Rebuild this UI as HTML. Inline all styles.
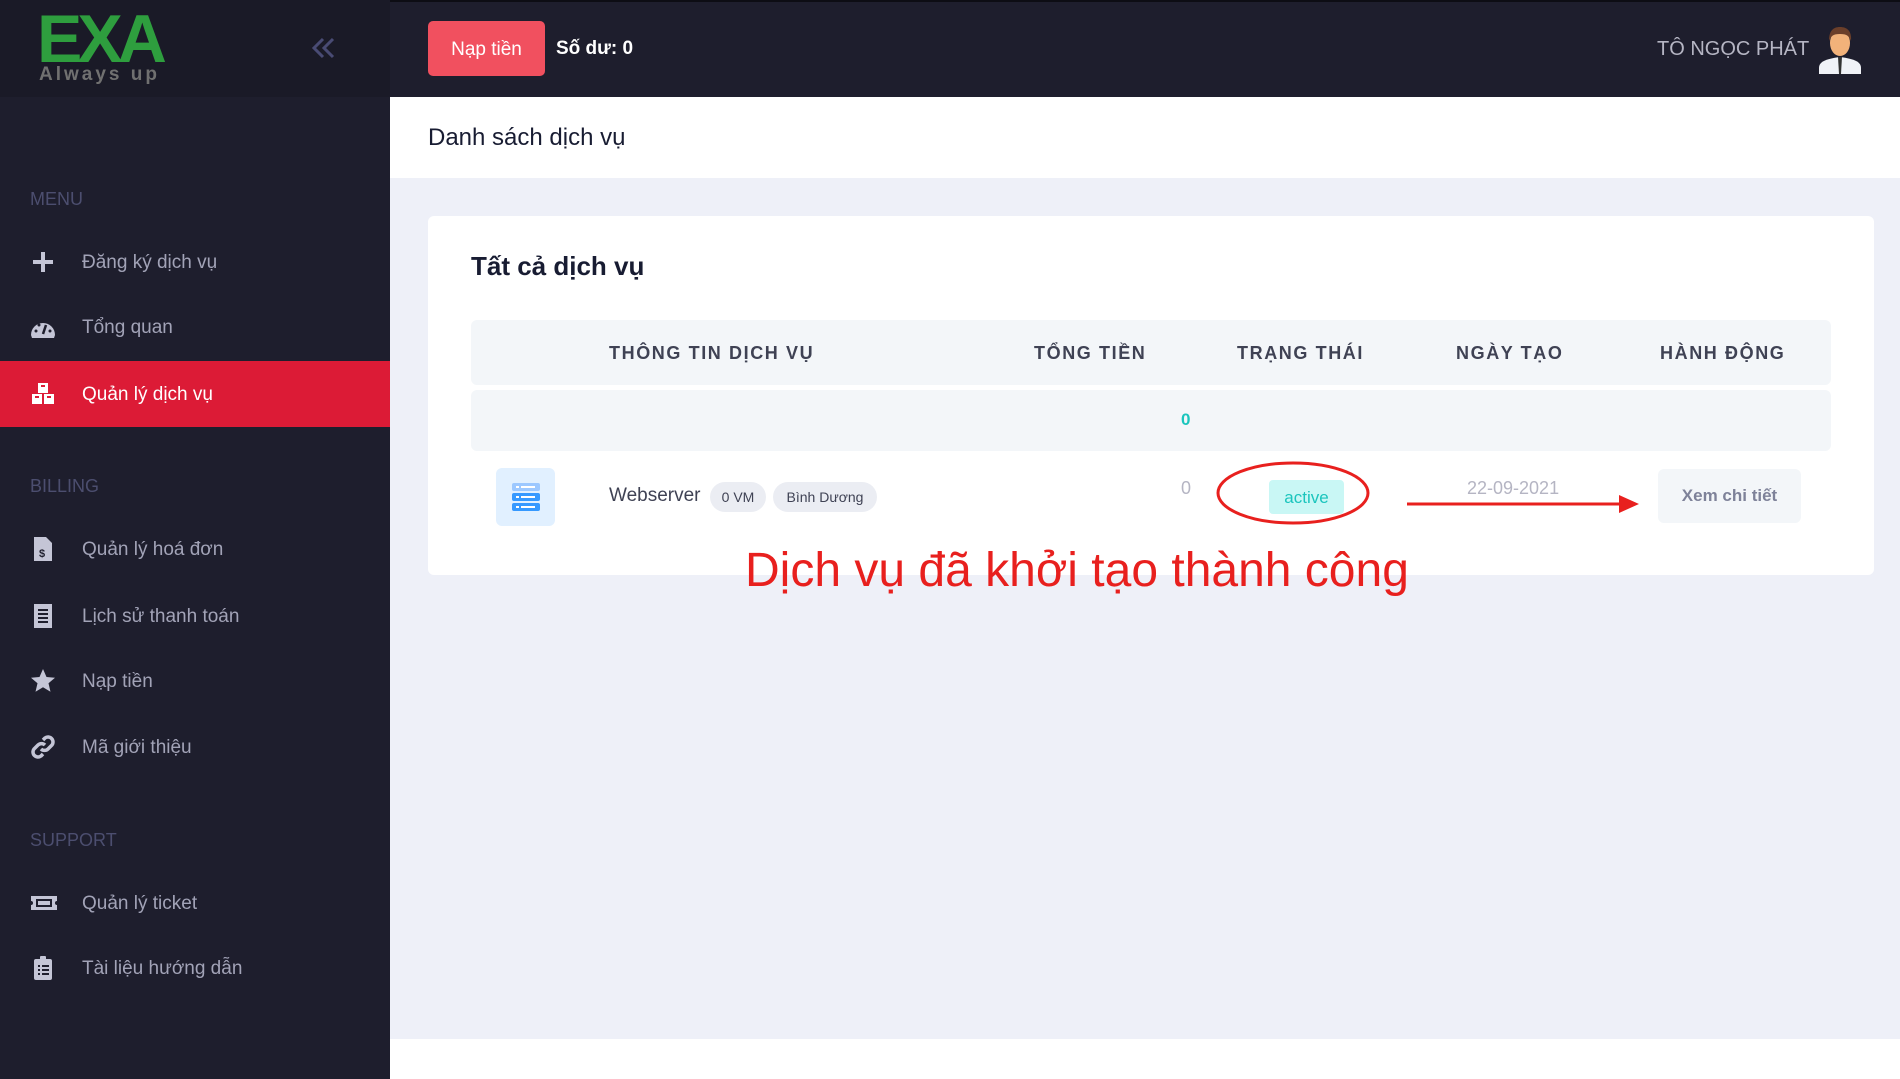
<!DOCTYPE html>
<html><head><meta charset="utf-8"><style>
*{margin:0;padding:0;box-sizing:border-box}
body{width:1900px;height:1079px;overflow:hidden;background:#eef0f8;font-family:"Liberation Sans","Noto Sans CJK SC",sans-serif;position:relative}
.a{position:absolute;white-space:nowrap}
.side{left:0;top:0;width:390px;height:1079px;background:#1e1e2d}
.logo{left:0;top:0;width:390px;height:97px;background:#1a1a27}
.top{left:390px;top:0;width:1510px;height:97px;background:#1e1e2d;border-top:2px solid #0d0d14}
.sec{left:30px;font-size:18px;color:#4c4e6f}
.it{left:82px;font-size:19px;color:#a2a3b7;transform:translateY(-45%)}
.ic{left:30px;width:26px;height:26px;transform:translateY(-50%)}
.hd{font-size:18px;font-weight:bold;color:#3f4254;letter-spacing:1.6px;top:343px}
</style></head><body>
<div class="a side"></div>
<div class="a logo"></div>
<div class="a" style="left:37px;top:0px;font-size:68px;font-weight:bold;color:#2e9e3e;letter-spacing:-5px">EXA</div>
<div class="a" style="left:39px;top:64px;font-size:19px;font-weight:bold;color:#707070;letter-spacing:3px">Always up</div>
<svg class="a" style="left:310px;top:36px" width="28" height="24" viewBox="0 0 28 24"><path d="M13 3 4 12l9 9M23 3l-9 9 9 9" fill="none" stroke="#494b74" stroke-width="3"/></svg>
<div class="a top"></div>
<div class="a" style="left:428px;top:21px;width:117px;height:55px;background:#f1505f;border-radius:5px;color:#fff;font-size:19px;line-height:57px;text-align:center">Nạp tiền</div>
<div class="a" style="left:556px;top:38px;font-size:19px;font-weight:bold;color:#fff">Số dư: 0</div>
<div class="a" style="left:1657px;top:38px;font-size:20px;color:#b5b5c3">TÔ NGỌC PHÁT</div>
<svg class="a" style="left:1817px;top:24px" width="46" height="50" viewBox="0 0 46 50"><path d="M2 50v-6c0-6 6-9 21-11 15 2 21 5 21 11v6z" fill="#f0f2f7"/><path d="M21 33h4l-1 17h-2z" fill="#333"/><ellipse cx="23" cy="19" rx="10" ry="13" fill="#f2b27a"/><path d="M12 17c0-10 4-14 11-14s12 4 11 14c-2-5-4-7-11-7s-9 2-11 7z" fill="#6b3f2a"/></svg>
<div class="a" style="left:390px;top:97px;width:1510px;height:81px;background:#fff"></div>
<div class="a" style="left:428px;top:124px;font-size:24px;color:#181c32">Danh sách dịch vụ</div>
<div class="a" style="left:428px;top:216px;width:1446px;height:359px;background:#fff;border-radius:6px"></div>
<div class="a" style="left:471px;top:251px;font-size:26px;font-weight:bold;color:#181c32">Tất cả dịch vụ</div>
<div class="a" style="left:471px;top:320px;width:1360px;height:65px;background:#f3f6f9;border-radius:6px"></div>
<div class="a" style="left:471px;top:390px;width:1360px;height:61px;background:#f3f6f9;border-radius:6px"></div>
<div class="a hd" style="left:609px">THÔNG TIN DỊCH VỤ</div>
<div class="a hd" style="left:1034px">TỔNG TIỀN</div>
<div class="a hd" style="left:1237px">TRẠNG THÁI</div>
<div class="a hd" style="left:1456px">NGÀY TẠO</div>
<div class="a hd" style="left:1660px">HÀNH ĐỘNG</div>
<div class="a" style="left:1181px;top:410px;font-size:17px;font-weight:bold;color:#1bc5bd">0</div>
<div class="a" style="left:496px;top:468px;width:59px;height:58px;background:#e1f0ff;border-radius:6px"></div>
<svg class="a" style="left:510px;top:481px" width="32" height="32" viewBox="0 0 32 32"><rect x="2" y="2" width="28" height="8" rx="2" fill="#9cc8ff"/><rect x="2" y="12" width="28" height="8" rx="2" fill="#3699ff"/><rect x="2" y="22" width="28" height="8" rx="2" fill="#3699ff"/><rect x="6" y="5" width="3" height="2" fill="#fff"/><rect x="11" y="5" width="14" height="2" fill="#fff"/><rect x="6" y="15" width="3" height="2" fill="#fff"/><rect x="11" y="15" width="14" height="2" fill="#fff"/><rect x="6" y="25" width="3" height="2" fill="#fff"/><rect x="11" y="25" width="14" height="2" fill="#fff"/></svg>
<div class="a" style="left:609px;top:485px;font-size:19px;color:#3f4254">Webserver</div>
<div class="a" style="left:710px;top:482px;width:56px;height:30px;background:#ebedf3;border-radius:15px;font-size:14px;line-height:30px;text-align:center;color:#3f4254">0 VM</div>
<div class="a" style="left:773px;top:482px;width:104px;height:30px;background:#ebedf3;border-radius:15px;font-size:14px;line-height:30px;text-align:center;color:#3f4254">Bình Dương</div>
<div class="a" style="left:1181px;top:478px;font-size:18px;color:#b5b5c3">0</div>
<div class="a" style="left:1269px;top:480px;width:75px;height:34px;background:#c9f7f5;border-radius:4px;font-size:17px;line-height:36px;text-align:center;color:#1bc5bd">active</div>
<svg class="a" style="left:1210px;top:458px" width="166" height="70"><ellipse cx="83" cy="35" rx="75" ry="30" fill="none" stroke="#e8201e" stroke-width="3"/></svg>
<div class="a" style="left:1467px;top:478px;font-size:18px;color:#b5b5c3">22-09-2021</div>
<svg class="a" style="left:1405px;top:492px" width="236" height="24"><path d="M2 12h212" stroke="#e8201e" stroke-width="3"/><path d="M214 3l20 9-20 9z" fill="#e8201e"/></svg>
<div class="a" style="left:1658px;top:469px;width:143px;height:54px;background:#f3f6f9;border-radius:6px;font-size:17px;font-weight:bold;line-height:54px;text-align:center;color:#7e8299">Xem chi tiết</div>
<div class="a" style="left:745px;top:543px;font-size:48px;color:#e8201e">Dịch vụ đã khởi tạo thành công</div>
<div class="a" style="left:390px;top:1039px;width:1510px;height:40px;background:#fff"></div>

<div class="a sec" style="top:189px">MENU</div>
<div class="a sec" style="top:476px">BILLING</div>
<div class="a sec" style="top:830px">SUPPORT</div>
<div class="a" style="left:0;top:361px;width:390px;height:66px;background:#dc1b36"></div>

<svg class="a ic" style="top:262px" viewBox="0 0 26 26"><path d="M13 3v20M3 13h20" stroke="#c4c5d6" stroke-width="4"/></svg>
<div class="a it" style="top:262px">Đăng ký dịch vụ</div>
<svg class="a ic" style="top:327px" viewBox="0 0 26 26"><path d="M1 21a12 12 0 0 1 24 0l-1 3H2z" fill="#c4c5d6"/><path d="M13 20l3-9" stroke="#1e1e2d" stroke-width="2.5"/><circle cx="6" cy="17" r="1.5" fill="#1e1e2d"/><circle cx="9" cy="11" r="1.5" fill="#1e1e2d"/><circle cx="20" cy="17" r="1.5" fill="#1e1e2d"/></svg>
<div class="a it" style="top:327px">Tổng quan</div>
<svg class="a ic" style="top:394px" viewBox="0 0 26 26"><rect x="8" y="2" width="10" height="10" fill="#fff"/><rect x="2" y="13" width="10" height="10" fill="#fff"/><rect x="14" y="13" width="10" height="10" fill="#fff"/><path d="M11 5h4M5 16h4M17 16h4" stroke="#dc1b36" stroke-width="2"/></svg>
<div class="a it" style="top:394px;color:#fff">Quản lý dịch vụ</div>

<svg class="a ic" style="top:549px" viewBox="0 0 26 26"><path d="M4 1h12l6 6v18H4z" fill="#c4c5d6"/><text x="9" y="21" font-size="11" font-weight="bold" fill="#1e1e2d" font-family="Liberation Sans">$</text></svg>
<div class="a it" style="top:549px">Quản lý hoá đơn</div>
<svg class="a ic" style="top:616px" viewBox="0 0 26 26"><path d="M4 1h18v24H4z" fill="#c4c5d6"/><path d="M8 7h10M8 11h10M8 15h10M8 19h10" stroke="#1e1e2d" stroke-width="2"/></svg>
<div class="a it" style="top:616px">Lịch sử thanh toán</div>
<svg class="a ic" style="top:681px" viewBox="0 0 26 26"><path d="M13 1l3.5 8 8.5.7-6.5 5.6 2 8.4L13 19.3 5.5 23.7l2-8.4L1 9.7 9.5 9z" fill="#c4c5d6"/></svg>
<div class="a it" style="top:681px">Nạp tiền</div>
<svg class="a ic" style="top:747px" viewBox="0 0 26 26"><path d="M11 15a5 5 0 0 0 7 0l4-4a5 5 0 0 0-7-7l-2 2M15 11a5 5 0 0 0-7 0l-4 4a5 5 0 0 0 7 7l2-2" fill="none" stroke="#c4c5d6" stroke-width="3.5"/></svg>
<div class="a it" style="top:747px">Mã giới thiệu</div>

<svg class="a ic" style="top:903px;width:28px" viewBox="0 0 28 26"><path d="M1 6h26v5a2 2 0 0 0 0 4v5H1v-5a2 2 0 0 0 0-4z" fill="#c4c5d6"/><rect x="6" y="9" width="16" height="8" fill="#1e1e2d"/><rect x="8" y="11" width="12" height="4" fill="#c4c5d6"/></svg>
<div class="a it" style="top:903px">Quản lý ticket</div>
<svg class="a ic" style="top:968px" viewBox="0 0 26 26"><rect x="4" y="4" width="18" height="21" rx="2" fill="#c4c5d6"/><rect x="10" y="1" width="6" height="5" rx="1" fill="#c4c5d6"/><path d="M8 11h2M12 11h7M8 15h2M12 15h7M8 19h2M12 19h7" stroke="#1e1e2d" stroke-width="2"/></svg>
<div class="a it" style="top:968px">Tài liệu hướng dẫn</div>
</body></html>
